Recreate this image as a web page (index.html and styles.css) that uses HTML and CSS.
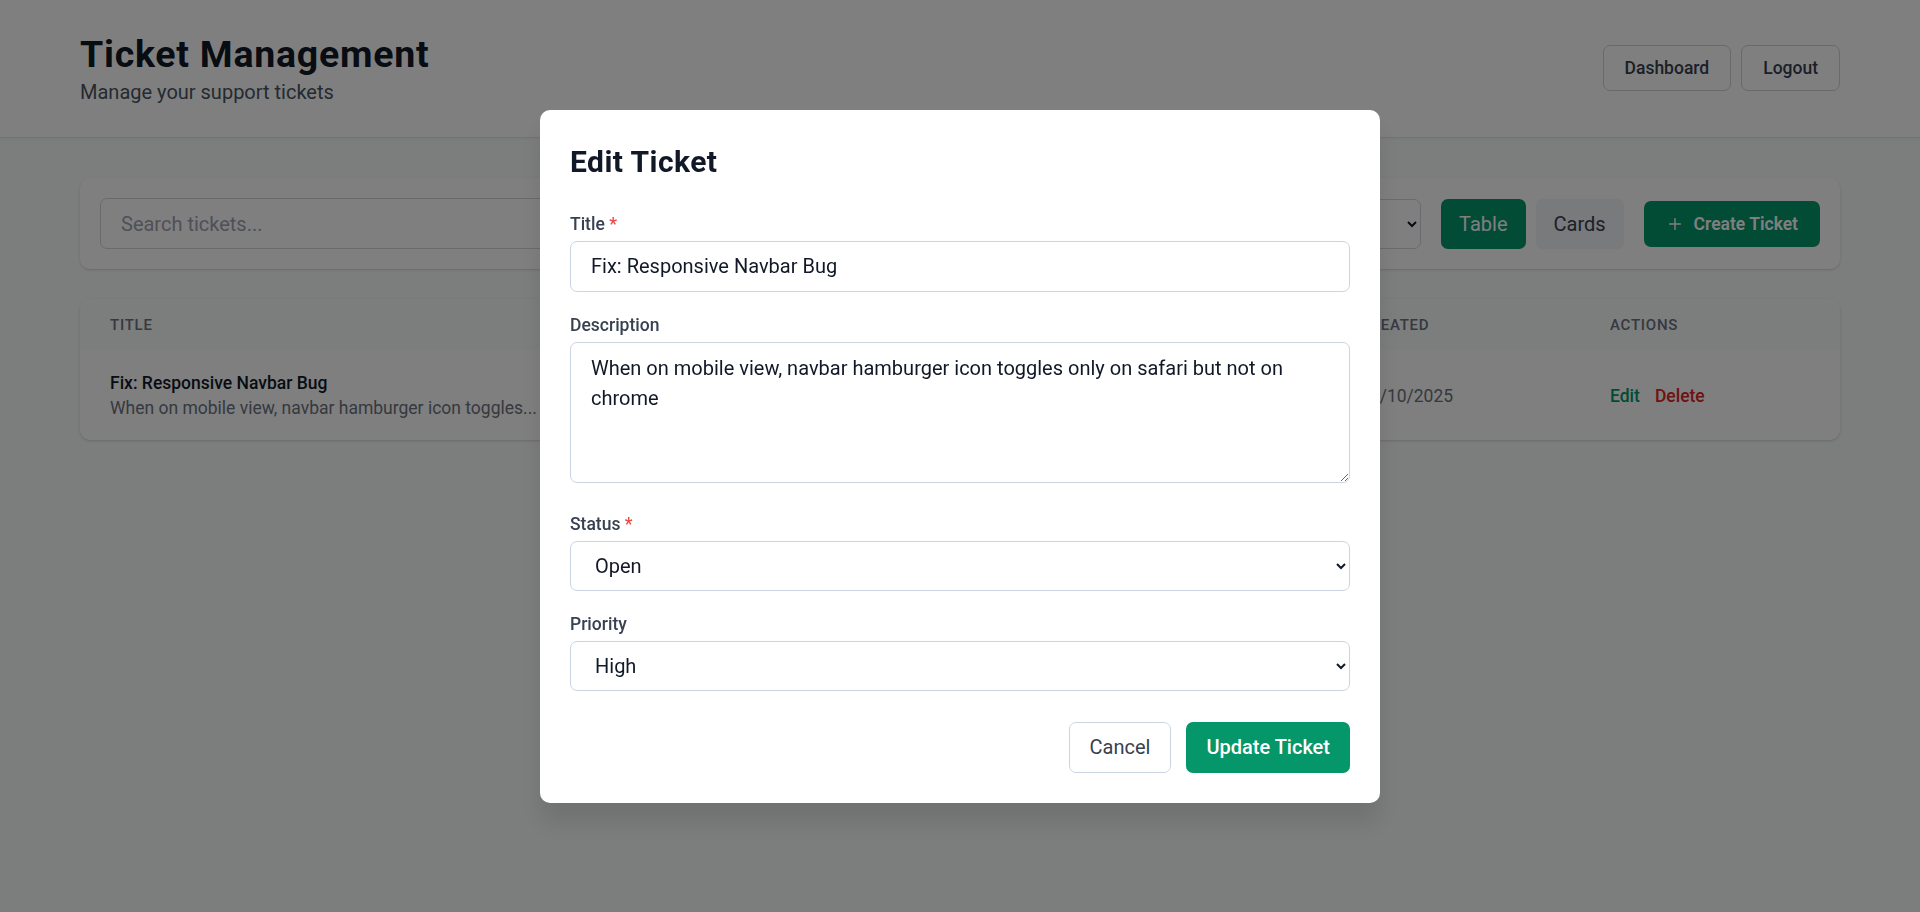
FILE: index.html
```html
<!DOCTYPE html>
<html lang="en">
<head>
<meta charset="utf-8">
<title>Ticket Management</title>
<link rel="stylesheet" href="styles.css">
</head>
<body>
<header class="header">
  <div class="header-inner">
    <div class="brand">
      <h1 class="page-title">Ticket Management</h1>
      <p class="page-sub">Manage your support tickets</p>
    </div>
    <nav class="header-nav">
      <button class="btn-outline">Dashboard</button>
      <button class="btn-outline">Logout</button>
    </nav>
  </div>
</header>

<main class="main">
  <section class="card filters">
    <input class="search" type="text" placeholder="Search tickets...">
    <select class="filter-select">
      <option>All Status</option>
    </select>
    <select class="filter-select">
      <option>All Priorities</option>
    </select>
    <div class="view-toggle">
      <button class="toggle active">Table</button>
      <button class="toggle">Cards</button>
    </div>
    <button class="btn-create">
      <svg class="plus" viewBox="0 0 20 20" width="18" height="18" aria-hidden="true"><path d="M10 4v12M4 10h12" stroke="currentColor" stroke-width="1.6" stroke-linecap="round" fill="none"/></svg>
      <span>Create Ticket</span>
    </button>
  </section>

  <section class="card table-card">
    <table class="tickets">
      <thead>
        <tr>
          <th class="col-title">Title</th>
          <th class="col-status">Status</th>
          <th class="col-priority">Priority</th>
          <th class="col-created">Created</th>
          <th class="col-actions">Actions</th>
        </tr>
      </thead>
      <tbody>
        <tr>
          <td>
            <div class="row-title">Fix: Responsive Navbar Bug</div>
            <div class="row-desc">When on mobile view, navbar hamburger icon toggles...</div>
          </td>
          <td><span class="badge badge-open">Open</span></td>
          <td><span class="badge badge-high">High</span></td>
          <td class="date">10/10/2025</td>
          <td><a class="act-edit">Edit</a><a class="act-delete">Delete</a></td>
        </tr>
      </tbody>
    </table>
  </section>
</main>

<div class="overlay">
  <div class="modal">
    <h2 class="modal-title">Edit Ticket</h2>
    <div class="field">
      <label class="label">Title <span class="req">*</span></label>
      <input class="control" type="text" value="Fix: Responsive Navbar Bug">
    </div>
    <div class="field">
      <label class="label">Description</label>
      <textarea class="control area" rows="4">When on mobile view, navbar hamburger icon toggles only on safari but not on chrome</textarea>
    </div>
    <div class="field field-gap">
      <label class="label">Status <span class="req">*</span></label>
      <select class="control sel">
        <option>Open</option>
        <option>In Progress</option>
        <option>Closed</option>
      </select>
    </div>
    <div class="field">
      <label class="label">Priority</label>
      <select class="control sel">
        <option>High</option>
        <option>Medium</option>
        <option>Low</option>
      </select>
    </div>
    <div class="modal-actions">
      <button class="btn-cancel">Cancel</button>
      <button class="btn-primary">Update Ticket</button>
    </div>
  </div>
</div>
</body>
</html>
```

FILE: styles.css
```css
* { box-sizing: border-box; }

html, body {
  margin: 0;
  padding: 0;
}

body {
  font-family: Roboto, "Noto Sans", sans-serif;
  background: #f9fafb;
  color: #111827;
  min-height: 912px;
}

button, input, select, textarea {
  font-family: inherit;
}

/* header */
.header {
  background: #ffffff;
  border-bottom: 1px solid #e5e7eb;
  box-shadow: 0 1px 2px rgba(0,0,0,0.05);
}
.header-inner {
  display: flex;
  align-items: center;
  justify-content: space-between;
  padding: 32px 80px 30px;
}
.page-title {
  margin: 0;
  font-size: 37.5px;
  line-height: 45px;
  font-weight: 700;
  letter-spacing: 0.02em;
  color: #111827;
}
.page-sub {
  margin: 0;
  font-size: 20px;
  line-height: 30px;
  color: #4b5563;
}
.header-nav {
  display: flex;
  gap: 10px;
  margin-bottom: 3px;
}
.btn-outline {
  height: 46px;
  padding: 0 21px;
  border: 1px solid #d1d5db;
  border-radius: 7px;
  background: #ffffff;
  color: #374151;
  font-size: 17.5px;
  font-weight: 500;
}

/* main */
.main {
  padding: 40px 80px;
}
.card {
  background: #ffffff;
  border-radius: 10px;
  box-shadow: 0 1px 3px rgba(0,0,0,0.1), 0 1px 2px rgba(0,0,0,0.06);
}
.filters {
  display: flex;
  align-items: center;
  gap: 20px;
  padding: 20px;
}
.search {
  flex: 1;
  height: 51px;
  padding: 12px 20px;
  border: 1px solid #d1d5db;
  border-radius: 7px;
  font-size: 20px;
  line-height: 25px;
  color: #111827;
}
.search::placeholder { color: #9ca3af; }
.filter-select {
  width: 200px;
  height: 50px;
  padding: 0 12px 0 16px;
  border: 1px solid #d1d5db;
  border-radius: 7px;
  background: #ffffff;
  font-size: 20px;
  color: #111827;
}
.view-toggle {
  display: flex;
  gap: 10px;
}
.toggle {
  height: 50px;
  padding: 0 18px;
  border: none;
  border-radius: 7px;
  background: #f3f4f6;
  color: #374151;
  font-size: 20px;
}
.toggle.active {
  background: #059669;
  color: #ffffff;
}
.btn-create {
  display: flex;
  align-items: center;
  gap: 10px;
  height: 46px;
  padding: 0 22px;
  border: none;
  border-radius: 7px;
  background: #059669;
  color: #ffffff;
  font-size: 17.5px;
  font-weight: 600;
}
.plus { display: block; }

/* table */
.table-card {
  margin-top: 30px;
  overflow: hidden;
}
.tickets {
  width: 100%;
  border-collapse: collapse;
  table-layout: fixed;
}
.col-title { width: 620px; }
.col-status { width: 315px; }
.col-priority { width: 315px; }
.col-created { width: 250px; }
.col-actions { width: 260px; }
.tickets th {
  background: #f9fafb;
  padding: 16px 30px 15px;
  text-align: left;
  font-size: 15px;
  line-height: 20px;
  font-weight: 500;
  letter-spacing: 0.05em;
  text-transform: uppercase;
  color: #6b7280;
}
.tickets td {
  padding: 21px 30px 19px;
  font-size: 17.5px;
  line-height: 25px;
  vertical-align: middle;
}
.row-title {
  font-weight: 500;
  color: #111827;
}
.row-desc {
  color: #6b7280;
  white-space: nowrap;
  overflow: hidden;
  text-overflow: ellipsis;
}
.badge {
  display: inline-block;
  padding: 2px 12px;
  border-radius: 999px;
  font-size: 15px;
  font-weight: 500;
}
.badge-open { background: #d1fae5; color: #065f46; }
.badge-high { background: #fee2e2; color: #991b1b; }
.date { color: #6b7280; }
.act-edit {
  color: #059669;
  font-weight: 500;
}
.act-delete {
  margin-left: 15px;
  color: #dc2626;
  font-weight: 500;
}

/* modal */
.overlay {
  position: fixed;
  inset: 0;
  background: rgba(0,0,0,0.5);
  display: flex;
  align-items: center;
  justify-content: center;
}
.modal {
  width: 840px;
  background: #ffffff;
  border-radius: 10px;
  padding: 30px;
  box-shadow: 0 20px 25px rgba(0,0,0,0.1);
}
.modal-title {
  margin: 0 0 30px;
  padding-top: 2px;
  font-size: 30px;
  line-height: 40px;
  font-weight: 700;
  letter-spacing: 0.015em;
  color: #111827;
}
.field {
  display: flex;
  flex-direction: column;
  gap: 4px;
  margin-bottom: 21px;
}
.field-gap { margin-top: 29px; }
.label {
  font-size: 17.5px;
  line-height: 25px;
  font-weight: 500;
  color: #374151;
}
.req { color: #ef4444; }
.control {
  display: block;
  width: 100%;
  border: 1px solid #cbd5e1;
  border-radius: 7px;
  background: #ffffff;
  font-size: 20px;
  color: #111827;
}
input.control {
  height: 51px;
  padding: 12px 20px;
  line-height: 25px;
}
.area {
  padding: 10px 20px;
  line-height: 30px;
  height: 141px;
  resize: vertical;
}
.sel {
  height: 50px;
  padding: 0 6px 0 20px;
}
.modal-actions {
  display: flex;
  justify-content: flex-end;
  gap: 15px;
  margin-top: 31px;
}
.btn-cancel {
  height: 51px;
  padding: 0 20px;
  border: 1px solid #cbd5e1;
  border-radius: 7px;
  background: #ffffff;
  color: #374151;
  font-size: 20px;
}
.btn-primary {
  height: 51px;
  padding: 0 20px;
  border: none;
  border-radius: 7px;
  background: #059669;
  color: #ffffff;
  font-size: 20px;
  font-weight: 500;
}
```
